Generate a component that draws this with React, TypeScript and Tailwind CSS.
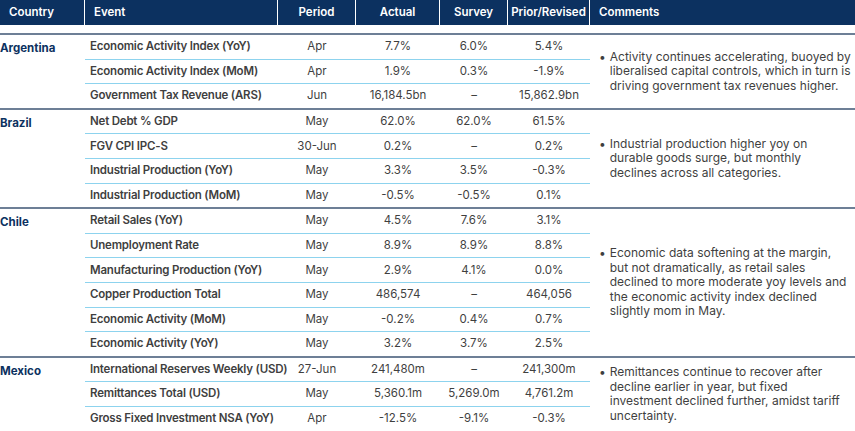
const groups = [
  {
    country: "Argentina",
    comment: "Activity continues accelerating, buoyed by liberalised capital controls, which in turn is driving government tax revenues higher.",
    rows: [
      ["Economic Activity Index (YoY)", "Apr", "7.7%", "6.0%", "5.4%"],
      ["Economic Activity Index (MoM)", "Apr", "1.9%", "0.3%", "-1.9%"],
      ["Government Tax Revenue (ARS)", "Jun", "16,184.5bn", "–", "15,862.9bn"],
    ],
  },
  {
    country: "Brazil",
    comment: "Industrial production higher yoy on durable goods surge, but monthly declines across all categories.",
    rows: [
      ["Net Debt % GDP", "May", "62.0%", "62.0%", "61.5%"],
      ["FGV CPI IPC-S", "30-Jun", "0.2%", "–", "0.2%"],
      ["Industrial Production (YoY)", "May", "3.3%", "3.5%", "-0.3%"],
      ["Industrial Production (MoM)", "May", "-0.5%", "-0.5%", "0.1%"],
    ],
  },
  {
    country: "Chile",
    comment: "Economic data softening at the margin, but not dramatically, as retail sales declined to more moderate yoy levels and the economic activity index declined slightly mom in May.",
    rows: [
      ["Retail Sales (YoY)", "May", "4.5%", "7.6%", "3.1%"],
      ["Unemployment Rate", "May", "8.9%", "8.9%", "8.8%"],
      ["Manufacturing Production (YoY)", "May", "2.9%", "4.1%", "0.0%"],
      ["Copper Production Total", "May", "486,574", "–", "464,056"],
      ["Economic Activity (MoM)", "May", "-0.2%", "0.4%", "0.7%"],
      ["Economic Activity (YoY)", "May", "3.2%", "3.7%", "2.5%"],
    ],
  },
  {
    country: "Mexico",
    comment: "Remittances continue to recover after decline earlier in year, but fixed investment declined further, amidst tariff uncertainty.",
    rows: [
      ["International Reserves Weekly (USD)", "27-Jun", "241,480m", "–", "241,300m"],
      ["Remittances Total (USD)", "May", "5,360.1m", "5,269.0m", "4,761.2m"],
      ["Gross Fixed Investment NSA (YoY)", "Apr", "-12.5%", "-9.1%", "-0.3%"],
    ],
  },
]

export default function App() {
  return (
    <div className="w-[855px] h-[431px] overflow-hidden bg-white text-[11.5px] text-[#3f3f3f]" style={{ fontFamily: "Inter, 'Noto Sans', sans-serif" }}>
      <div className="flex h-[25px] bg-[#0c3160] text-white font-semibold text-[11.5px]">
        <div className="w-[85px] pl-[9px] flex items-center border-r border-white">Country</div>
        <div className="w-[193px] pl-[9px] flex items-center border-r border-white">Event</div>
        <div className="w-[78px] flex items-center justify-center border-r border-white">Period</div>
        <div className="w-[84px] flex items-center justify-center border-r border-white">Actual</div>
        <div className="w-[68px] flex items-center justify-center border-r border-white">Survey</div>
        <div className="w-[82px] flex items-center justify-center border-r border-white">Prior/Revised</div>
        <div className="flex-1 pl-[9px] flex items-center">Comments</div>
      </div>
      <div className="h-[8px]" />
      {groups.map((g) => (
        <div key={g.country} className="flex border-t-2 border-[#6d7f96]">
          <div className="w-[85px] pt-[5px] font-bold text-[#0c3160]">{g.country}</div>
          <div className="w-[505px]">
            {g.rows.map((r, i) => (
              <div key={i} className={`flex h-[23.6px] box-content items-center ${i > 0 ? "border-t border-[#8dd3ee]" : ""}`}>
                <div className="w-[193px] pl-[5px] font-semibold whitespace-nowrap tracking-[-0.2px]">{r[0]}</div>
                <div className="w-[78px] text-center">{r[1]}</div>
                <div className="w-[84px] text-center">{r[2]}</div>
                <div className="w-[68px] text-center">{r[3]}</div>
                <div className="w-[82px] text-center">{r[4]}</div>
              </div>
            ))}
          </div>
          <div className="flex-1 flex items-center pl-[9px] pr-[4px]">
            <div className="flex gap-[4px] leading-[14.5px] text-[12px]">
              <span>•</span>
              <span>{g.comment}</span>
            </div>
          </div>
        </div>
      ))}
      <div className="border-t-2 border-[#6d7f96]" />
    </div>
  )
}
